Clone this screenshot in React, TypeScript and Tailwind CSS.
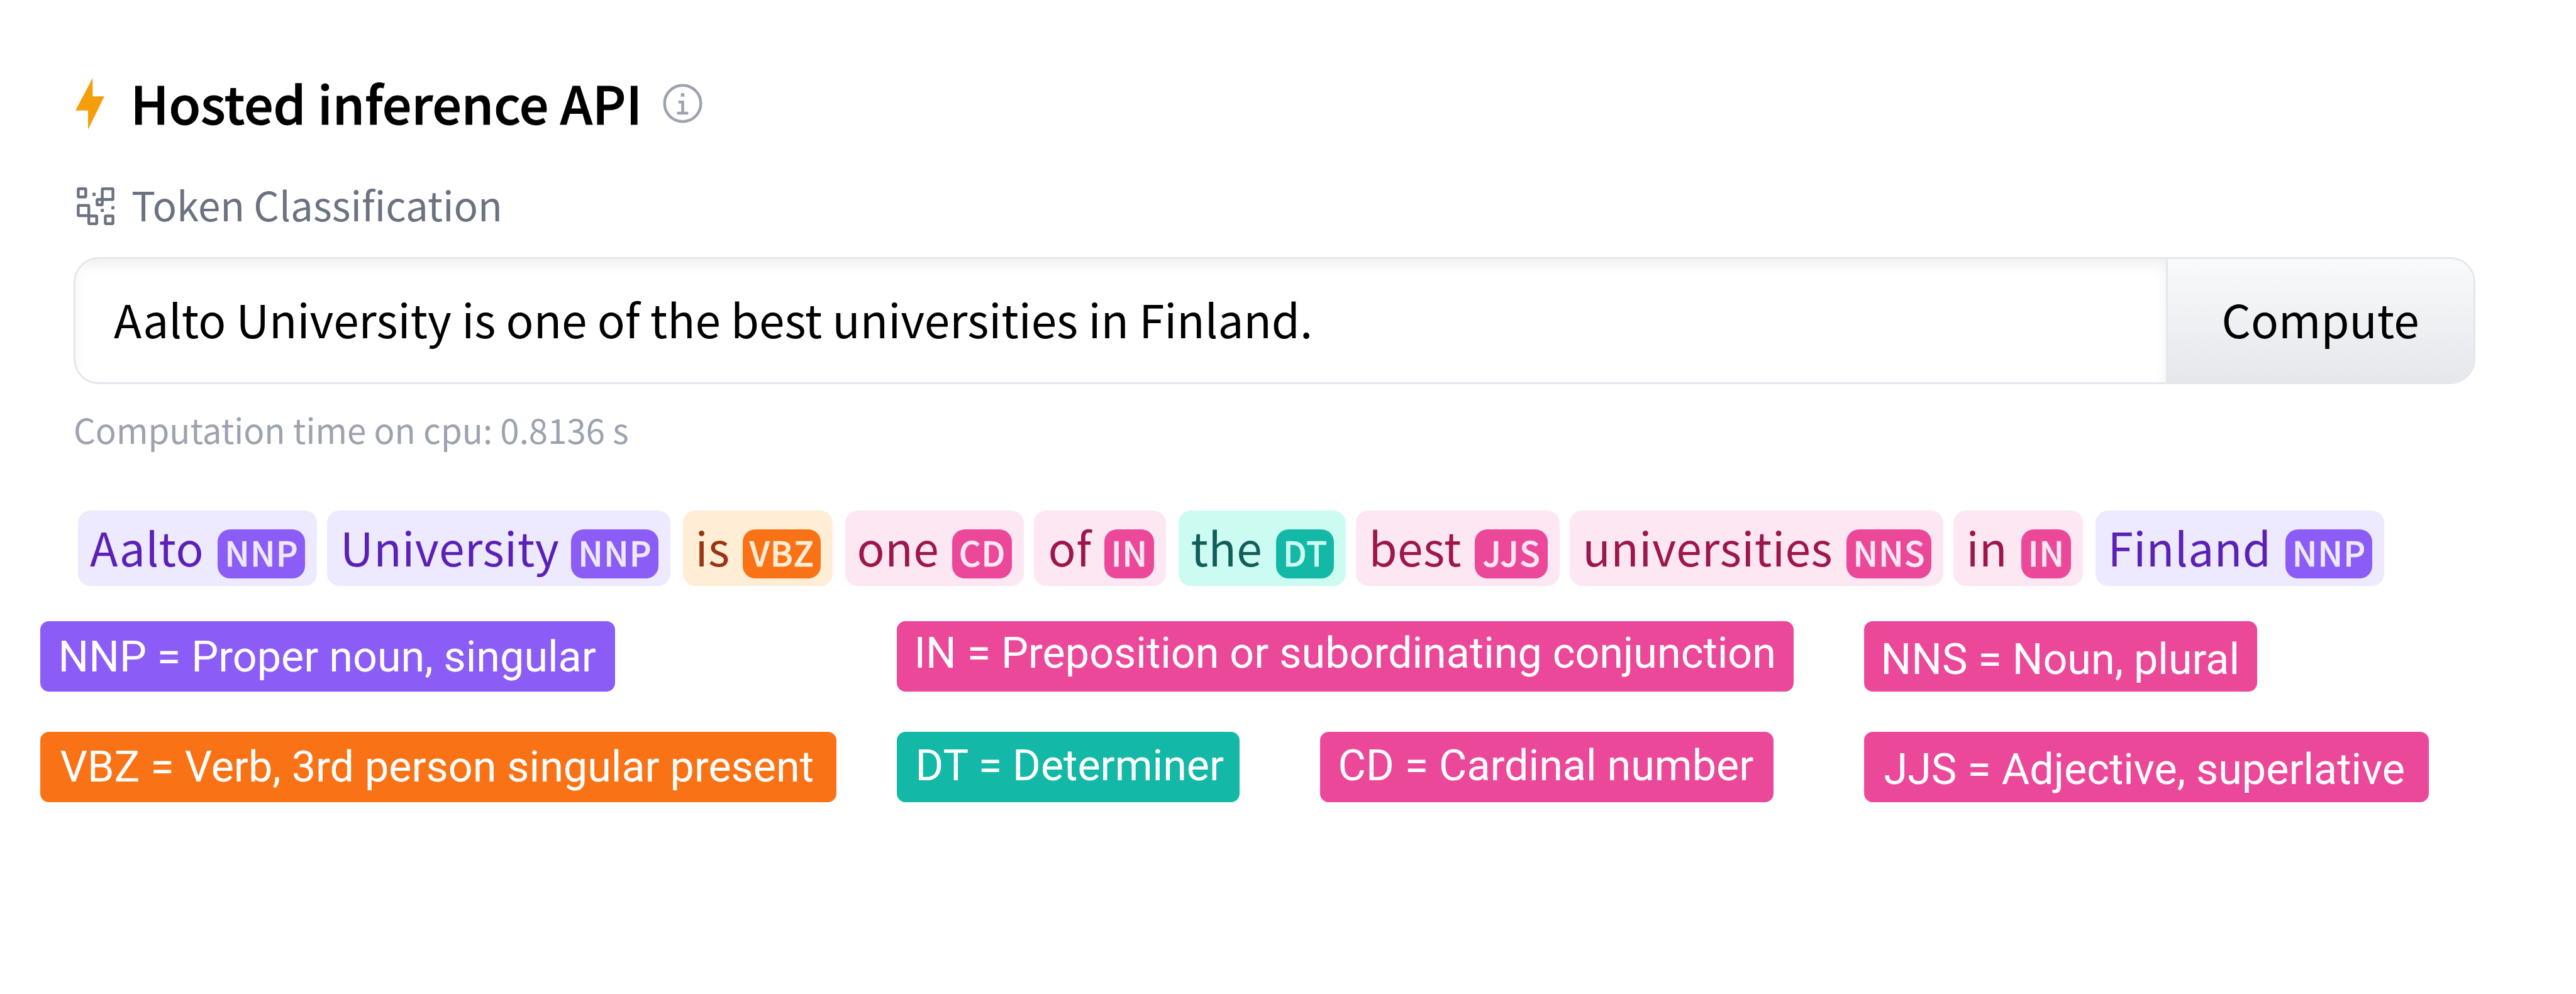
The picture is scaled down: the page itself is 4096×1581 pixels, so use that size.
type Tone = { box: string; badge: string };

const violet: Tone = { box: 'bg-[#ede9fe] text-[#5b21b6]', badge: 'bg-[#8b5cf6] text-[#ede9fe]' };
const orange: Tone = { box: 'bg-[#ffedd5] text-[#9a3412]', badge: 'bg-[#f97316] text-[#ffedd5]' };
const pink: Tone = { box: 'bg-[#fce7f3] text-[#9d174d]', badge: 'bg-[#ec4899] text-[#fce7f3]' };
const teal: Tone = { box: 'bg-[#ccfbf1] text-[#115e59]', badge: 'bg-[#14b8a6] text-[#ccfbf1]' };

const tokens = [
  { word: 'Aalto', tag: 'NNP', tone: violet, box: 'pl-[19px] w-[380px]', badge: 'w-[139px]' },
  { word: 'University', tag: 'NNP', tone: violet, box: 'pl-[21px] ml-[16px] w-[546px]', badge: 'w-[139px]' },
  { word: 'is', tag: 'VBZ', tone: orange, box: 'pl-[19.5px] ml-[20px] w-[238px]', badge: 'w-[124px]' },
  { word: 'one', tag: 'CD', tone: pink, box: 'pl-[18.5px] ml-[20px] w-[284px]', badge: 'w-[95px]' },
  { word: 'of', tag: 'IN', tone: pink, box: 'pl-[22.5px] ml-[16px] w-[210px]', badge: 'w-[79px]' },
  { word: 'the', tag: 'DT', tone: teal, box: 'pl-[19.5px] ml-[20px] w-[266px]', badge: 'w-[92px]' },
  { word: 'best', tag: 'JJS', tone: pink, box: 'pl-[20.5px] ml-[16px] w-[324px]', badge: 'w-[116px]' },
  { word: 'universities', tag: 'NNS', tone: pink, box: 'pl-[20.5px] ml-[16px] w-[594px]', badge: 'w-[135px]' },
  { word: 'in', tag: 'IN', tone: pink, box: 'pl-[20.5px] ml-[16px] w-[206px]', badge: 'w-[79px]' },
  { word: 'Finland', tag: 'NNP', tone: violet, box: 'pl-[19.5px] ml-[20px] w-[459px]', badge: 'w-[138px]' },
];

const legend = [
  [
    { text: 'NNP = Proper noun, singular', style: 'bg-[#8b5cf6] w-[914px] pl-[29px] leading-[115.6px]' },
    { text: 'IN = Preposition or subordinating conjunction', style: 'bg-[#ec4899] ml-[448px] w-[1426px] pl-[28px] leading-[102.6px]' },
    { text: 'NNS = Noun, plural', style: 'bg-[#ec4899] ml-[112px] w-[625px] pl-[27px] leading-[122.8px]' },
  ],
  [
    { text: 'VBZ = Verb, 3rd person singular present', style: 'bg-[#f97316] w-[1266px] pl-[32px] leading-[112.4px]' },
    { text: 'DT = Determiner', style: 'bg-[#14b8a6] ml-[96px] w-[545px] pl-[30px] leading-[109.2px]' },
    { text: 'CD = Cardinal number', style: 'bg-[#ec4899] ml-[128px] w-[721px] pl-[29px] leading-[109.2px]' },
    { text: 'JJS = Adjective, superlative', style: 'bg-[#ec4899] ml-[144px] w-[898px] pl-[32px] leading-[120.8px]' },
  ],
];

function BoltIcon() {
  return (
    <svg className="mt-[6px] h-[82px] w-[46px] shrink-0" viewBox="0 0 46 82" fill="#f59e0b">
      <path d="M27.3 0V29.3H46L20 82V51.8H0Z" />
    </svg>
  );
}

function InfoIcon() {
  return (
    <svg className="mt-[5px] ml-[29px] size-[71px] shrink-0" viewBox="0 0 32 32" fill="#9ca3af">
      <path d="M17 22v-8h-4v2h2v6h-3v2h8v-2z" />
      <rect x="14.7" y="8.7" width="2.5" height="2.5" rx="0.4" />
      <circle cx="16" cy="16" r="13" fill="none" stroke="#9ca3af" strokeWidth="2" />
    </svg>
  );
}

function TokenIcon() {
  return (
    <svg className="mt-[7px] h-[60px] w-[60px] shrink-0" viewBox="90 97 310 311" fill="none" stroke="#6b7280" strokeWidth="23">
      <rect x="102" y="109" width="62" height="67" rx="6" />
      <rect x="102" y="246" width="87" height="84" rx="6" />
      <rect x="189" y="333" width="65" height="64" rx="6" />
      <rect x="300" y="109" width="88" height="88" rx="6" />
      <rect x="257" y="197" width="43" height="44" rx="6" />
      <rect x="325" y="333" width="63" height="63" rx="6" />
      <g fill="#6b7280" stroke="none">
        <rect x="220" y="141" width="25" height="27" rx="4" />
        <rect x="288" y="275" width="25" height="26" rx="4" />
        <rect x="375" y="252" width="25" height="27" rx="4" />
      </g>
    </svg>
  );
}

export default function App() {
  return (
    <main className="flex h-[1581px] w-[4096px] flex-col overflow-hidden bg-white font-['Noto_Sans_CJK_JP','Noto_Sans',sans-serif] whitespace-nowrap text-black">
      <header className="mt-[102px] ml-[120px] flex h-[120px] items-center">
        <BoltIcon />
        <h1 className="ml-[41.5px] text-[82.4px] leading-[120px] font-medium [-webkit-text-stroke:1px_black]">
          Hosted inference API
        </h1>
        <InfoIcon />
      </header>

      <div className="mt-[52px] ml-[122px] flex h-[100px] items-center text-[#6b7280]">
        <TokenIcon />
        <span className="ml-[27px] text-[63.7px] leading-[99px]">Token Classification</span>
      </div>

      <div className="mt-[35px] ml-[117px] flex h-[202px] w-[3819px] overflow-hidden rounded-[40px] border-[3px] border-[#e5e7eb] text-[72.8px]">
        <div className="flex-1 pl-[61px] leading-[190px] shadow-[inset_0_10px_20px_rgba(0,0,0,0.06)]">
          Aalto University is one of the best universities in Finland.
        </div>
        <button className="w-[489px] border-l-[3px] border-[#e5e7eb] bg-linear-to-b from-[#f9fafb] to-[#e5e7eb] pb-[6px] pl-[85.5px] text-left leading-[190px]">
          Compute
        </button>
      </div>

      <p className="mt-[32px] ml-[117px] h-[80px] text-[54.6px] leading-[79px] text-[#9ca3af]">
        Computation time on cpu: 0.8136 s
      </p>

      <div className="mt-[89px] ml-[124px] flex h-[120px]">
        {tokens.map((t, i) => (
          <span
            key={i}
            className={`flex h-[120px] shrink-0 rounded-[20px] text-[73px] leading-[115px] tracking-[0.5px] ${t.tone.box} ${t.box}`}
          >
            {t.word}
            <span
              className={`mt-[30px] mr-[19px] ml-auto h-[78px] rounded-[20px] pl-px text-center text-[54px] leading-[72px] font-medium tracking-[1px] [-webkit-text-stroke:0.6px_currentColor] ${t.tone.badge} ${t.badge}`}
            >
              {t.tag}
            </span>
          </span>
        ))}
      </div>

      <section className="mt-[56px] ml-[63.5px] flex flex-col gap-[64px] font-['Roboto',sans-serif] text-[68.25px] text-white">
        {legend.map((row, i) => (
          <div key={i} className="flex h-[112px]">
            {row.map((item) => (
              <span key={item.text} className={`h-[112px] shrink-0 rounded-[14px] ${item.style}`}>
                {item.text}
              </span>
            ))}
          </div>
        ))}
      </section>
    </main>
  );
}
